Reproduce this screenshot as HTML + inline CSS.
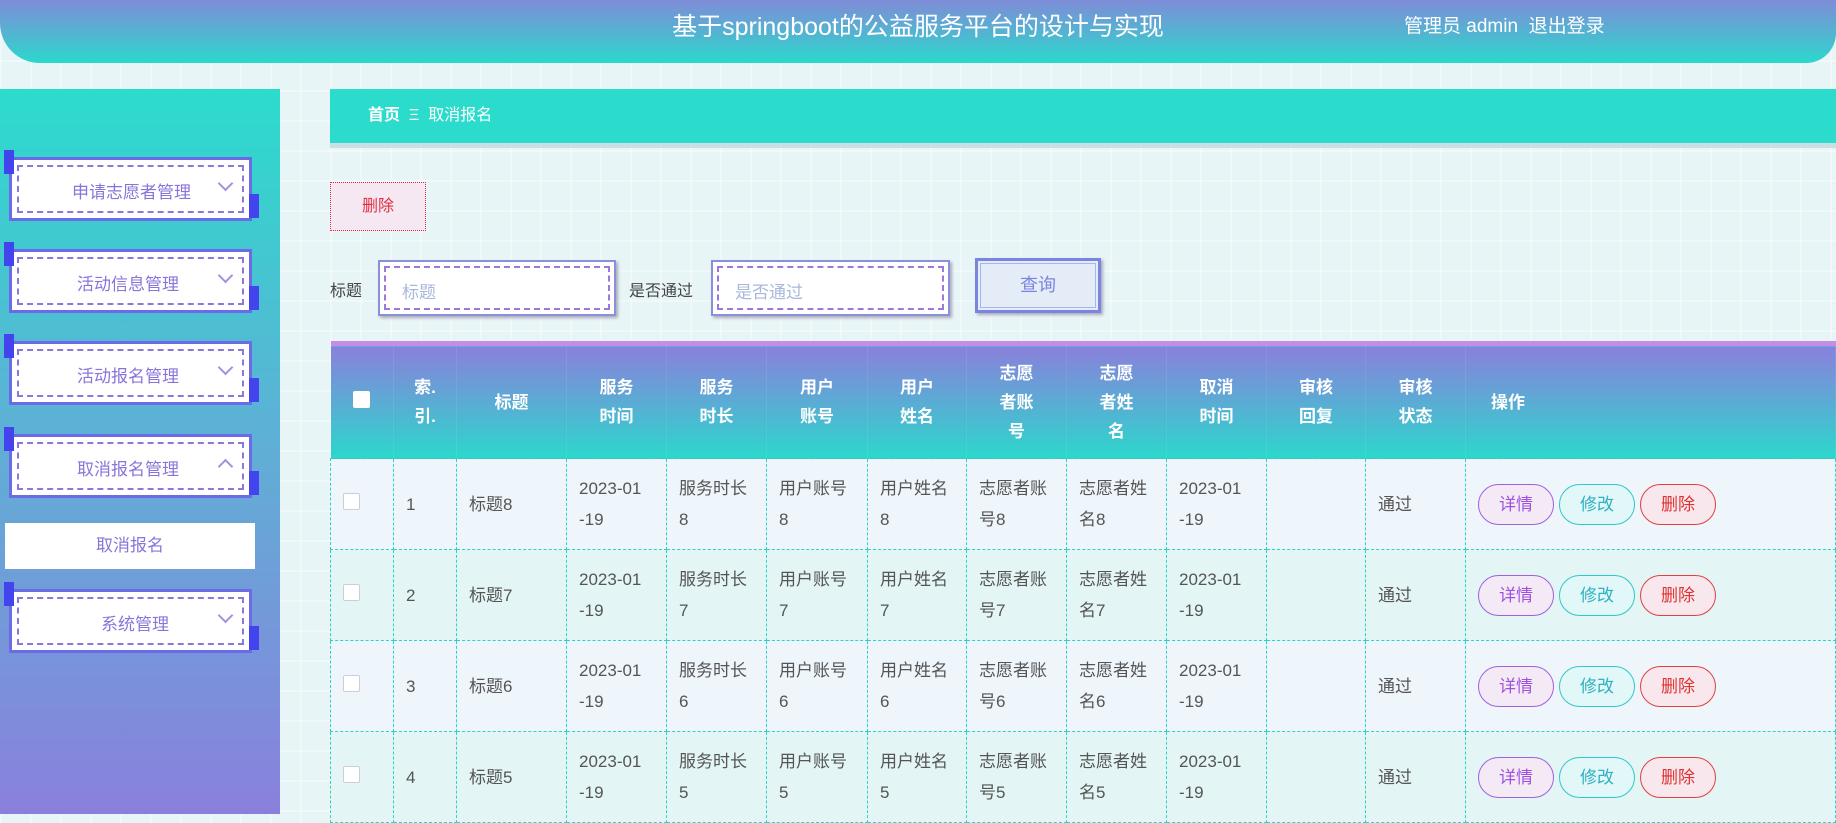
<!DOCTYPE html>
<html><head><meta charset="utf-8"><style>
*{box-sizing:border-box;margin:0;padding:0}
body{width:1836px;height:814px;overflow:hidden;position:relative;font-family:"Liberation Sans","Noto Sans CJK SC",sans-serif;
background-color:#e8f5f6;background-image:linear-gradient(rgba(255,255,255,.35) 2px,transparent 2px),linear-gradient(90deg,rgba(255,255,255,.35) 2px,transparent 2px);background-size:30px 30px}
.hdr{position:absolute;left:0;top:0;width:1836px;height:63px;background:linear-gradient(#7f8cd8,#2bd8cc);border-radius:0 0 30px 40px}
.title{position:absolute;left:0;width:1836px;top:7px;text-align:center;color:#fff;font-size:25px}
.user{position:absolute;left:1404px;top:11px;color:#fff;font-size:19px;white-space:nowrap}
.side{position:absolute;left:0;top:89px;width:280px;height:725px;background:linear-gradient(#2bdccc 0%,#60aed6 50%,#8a80dc 100%)}
.mi{position:absolute;left:9px;width:243px;height:64px;background:#fff;border:3px solid #6d6ae8;}
.mi:after{content:"";position:absolute;left:5px;top:5px;right:5px;bottom:5px;border:2px dashed #8a78dc}
.mi span{position:absolute;right:58px;top:18px;color:#8a74da;font-size:17px;white-space:nowrap}
.mi i{position:absolute;right:18px;top:18px;width:11px;height:11px;border-right:2px solid #a88ee0;border-bottom:2px solid #a88ee0;transform:rotate(45deg);font-style:normal}
.mi i.up{top:24px;transform:rotate(-135deg)}
.cb1,.cb2{position:absolute;width:10px;height:24px;background:#4444ee}
.cb1{left:-8px;top:-10px}.cb2{right:-10px;top:34px}
.sub{position:absolute;left:5px;width:250px;height:46px;background:#fff;color:#8a74da;font-size:17px;text-align:center;line-height:46px}
.bc{position:absolute;left:330px;top:89px;width:1506px;height:54px;background:#2bdccc;box-shadow:0 5px 0 #c8dfe4;color:#fff;font-size:16px;line-height:54px;padding-left:38px}
.del{position:absolute;left:330px;top:182px;width:96px;height:49px;background:#f5e8f2;border:1px dotted #e03040;color:#e03040;font-size:16px;text-align:center;line-height:47px}
.lbl{position:absolute;top:277px;font-size:16px;color:#444}
.inp{position:absolute;top:260px;height:56px;background:#fff;border:2px solid #8a90dc;box-shadow:2px 2px 3px #aab}
.inp:after{content:"";position:absolute;left:4px;top:4px;right:4px;bottom:4px;border:2px dashed #9a78dc}
.inp span{position:absolute;left:22px;top:16px;color:#a8b8dc;font-size:17px}
.q{position:absolute;left:975px;top:258px;width:126px;height:55px;background:#e4ecf8;border:3px solid #7a85e0;outline:1px solid #aab4ee;outline-offset:-6px;color:#7a85e0;font-size:18px;text-align:center;line-height:49px;box-shadow:2px 2px 3px #aab}
table{position:absolute;left:330px;top:341px;border-collapse:collapse;table-layout:fixed;width:1506px;border-top:5px solid #c58de8}
th{height:115px;color:#fff;font-size:17px;font-weight:bold;line-height:29px;background:linear-gradient(#8a80dc,#2bd8cc);border-right:1px solid rgba(255,255,255,.08)}
td{height:91px;border:1px dashed #2bd4c8;color:#555;font-size:17px;line-height:31px;padding:0 12px;vertical-align:middle;white-space:nowrap;overflow:hidden}
tr.ra td{background:#eef5fb}tr.rb td{background:#e3f5f4}
.ck{display:inline-block;width:17px;height:17px;background:#fff;border:1px solid #ccd;border-radius:2px}
.hk{display:inline-block;width:17px;height:17px;background:#fff;border-radius:2px}
.bt{display:inline-block;width:76px;height:41px;border-radius:21px;border:1px solid;text-align:center;line-height:39px;font-size:17px;margin-right:5px}
.b1{border-color:#a060e0;background:#f4eaf6;color:#a050e0}
.b2{border-color:#30c8c8;background:#e2f8f8;color:#30b0c0}
.b3{border-color:#e04040;background:#f8e8ee;color:#e03030}
</style></head><body>
<div class="hdr"><div class="title">基于springboot的公益服务平台的设计与实现</div><div class="user">管理员 admin &nbsp;退出登录</div></div>
<div class="side">
 <div class="mi" style="top:68px"><div class="cb1"></div><div class="cb2"></div><span>申请志愿者管理</span><i></i></div>
 <div class="mi" style="top:160px"><div class="cb1"></div><div class="cb2"></div><span style="right:70px">活动信息管理</span><i></i></div>
 <div class="mi" style="top:252px"><div class="cb1"></div><div class="cb2"></div><span style="right:70px">活动报名管理</span><i></i></div>
 <div class="mi" style="top:345px"><div class="cb1"></div><div class="cb2"></div><span style="right:70px">取消报名管理</span><i class="up"></i></div>
 <div class="sub" style="top:434px">取消报名</div>
 <div class="mi" style="top:500px"><div class="cb1"></div><div class="cb2"></div><span style="right:80px">系统管理</span><i></i></div>
</div>
<div class="bc"><b>首页</b>&nbsp; Ξ &nbsp;取消报名</div>
<div class="del">删除</div>
<div class="lbl" style="left:330px">标题</div>
<div class="inp" style="left:378px;width:238px"><span>标题</span></div>
<div class="lbl" style="left:629px">是否通过</div>
<div class="inp" style="left:711px;width:239px"><span>是否通过</span></div>
<div class="q">查询</div>
<table>
<colgroup><col style="width:63px"><col style="width:63px"><col style="width:110px"><col style="width:100px"><col style="width:100px"><col style="width:101px"><col style="width:99px"><col style="width:100px"><col style="width:100px"><col style="width:100px"><col style="width:99px"><col style="width:100px"><col></colgroup>
<tr><th><span class="hk"></span></th><th>索.<br>引.</th><th>标题</th><th>服务<br>时间</th><th>服务<br>时长</th><th>用户<br>账号</th><th>用户<br>姓名</th><th>志愿<br>者账<br>号</th><th>志愿<br>者姓<br>名</th><th>取消<br>时间</th><th>审核<br>回复</th><th>审核<br>状态</th><th style="text-align:left;padding-left:25px">操作</th></tr>
<tr class="ra"><td><span class="ck"></span></td><td>1</td><td>标题8</td><td>2023-01<br>-19</td><td>服务时长<br>8</td><td>用户账号<br>8</td><td>用户姓名<br>8</td><td>志愿者账<br>号8</td><td>志愿者姓<br>名8</td><td>2023-01<br>-19</td><td></td><td>通过</td><td><span class="bt b1">详情</span><span class="bt b2">修改</span><span class="bt b3">删除</span></td></tr>
<tr class="rb"><td><span class="ck"></span></td><td>2</td><td>标题7</td><td>2023-01<br>-19</td><td>服务时长<br>7</td><td>用户账号<br>7</td><td>用户姓名<br>7</td><td>志愿者账<br>号7</td><td>志愿者姓<br>名7</td><td>2023-01<br>-19</td><td></td><td>通过</td><td><span class="bt b1">详情</span><span class="bt b2">修改</span><span class="bt b3">删除</span></td></tr>
<tr class="ra"><td><span class="ck"></span></td><td>3</td><td>标题6</td><td>2023-01<br>-19</td><td>服务时长<br>6</td><td>用户账号<br>6</td><td>用户姓名<br>6</td><td>志愿者账<br>号6</td><td>志愿者姓<br>名6</td><td>2023-01<br>-19</td><td></td><td>通过</td><td><span class="bt b1">详情</span><span class="bt b2">修改</span><span class="bt b3">删除</span></td></tr>
<tr class="rb"><td><span class="ck"></span></td><td>4</td><td>标题5</td><td>2023-01<br>-19</td><td>服务时长<br>5</td><td>用户账号<br>5</td><td>用户姓名<br>5</td><td>志愿者账<br>号5</td><td>志愿者姓<br>名5</td><td>2023-01<br>-19</td><td></td><td>通过</td><td><span class="bt b1">详情</span><span class="bt b2">修改</span><span class="bt b3">删除</span></td></tr>
</table>
</body></html>
